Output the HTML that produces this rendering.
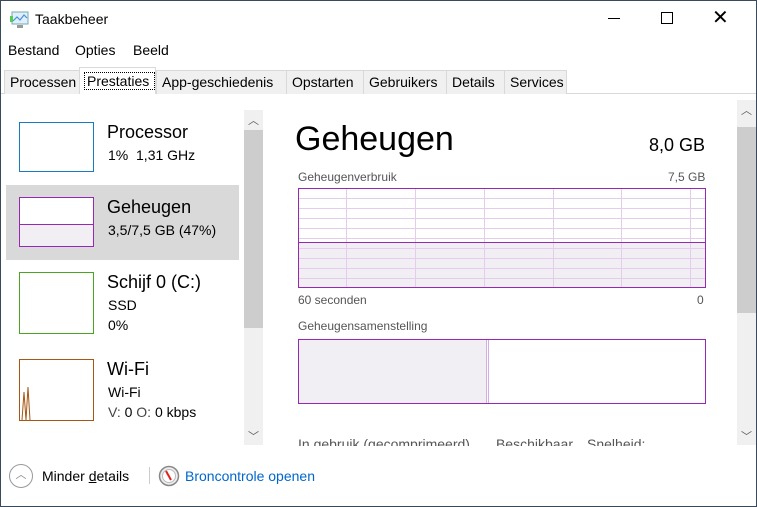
<!DOCTYPE html>
<html><head><style>
*{margin:0;padding:0;box-sizing:border-box}
body{width:757px;height:507px;background:#fff;font-family:"Liberation Sans",sans-serif;color:#000;position:relative;overflow:hidden}
.a{position:absolute;white-space:nowrap}
.tab{position:absolute;top:70px;height:24px;background:#f0f0f0;border:1px solid #d9d9d9;border-bottom:none;font-size:14px;padding:3px 0 0 5px}
.side{font-size:18px}
.sub{font-size:14px}
.g{color:#444}
</style></head><body>
<div class="a" style="left:0;top:0;width:757px;height:507px;border:1px solid #3b4a5a;z-index:9;pointer-events:none"></div>
<svg class="a" style="left:10px;top:11px" width="20" height="18"><rect x="2" y="1" width="16" height="12" fill="#dfefff" stroke="#7aa" /><polyline points="3,10 7,6 10,9 14,4 17,7" fill="none" stroke="#4a8fd6" stroke-width="1.2"/><rect x="0" y="5" width="3" height="6" fill="#5c5"/><rect x="7" y="14" width="6" height="3" fill="#999"/></svg>
<div class="a" style="left:35px;top:11px;font-size:14px">Taakbeheer</div>
<div class="a" style="left:608px;top:18px;width:12px;height:1px;background:#000"></div>
<div class="a" style="left:661px;top:12px;width:12px;height:12px;border:1px solid #000"></div>
<div class="a" style="left:712px;top:5px;font-size:20px;font-weight:300">✕</div>
<div class="a" style="left:8px;top:42px;font-size:14px">Bestand</div>
<div class="a" style="left:75px;top:42px;font-size:14px">Opties</div>
<div class="a" style="left:133px;top:42px;font-size:14px">Beeld</div>
<div class="a" style="left:0;top:93px;width:757px;height:1px;background:#d9d9d9"></div>
<div class="tab" style="left:4px;width:76px">Processen</div>
<div class="tab" style="left:79px;width:77px;top:67px;height:27px;background:#fff;z-index:2;padding-left:4px"><div style="border:1px dotted #000;padding:0 2px;margin-top:1px">Prestaties</div></div>
<div class="tab" style="left:156px;width:131px">App-geschiedenis</div>
<div class="tab" style="left:286px;width:78px">Opstarten</div>
<div class="tab" style="left:363px;width:84px">Gebruikers</div>
<div class="tab" style="left:446px;width:59px">Details</div>
<div class="tab" style="left:504px;width:63px">Services</div>

<div class="a" style="left:19px;top:122px;width:75px;height:50px;border:1px solid #1a7ac0"></div>
<div class="a side" style="left:107px;top:122px">Processor</div>
<div class="a sub" style="left:108px;top:147px">1%&nbsp; 1,31 GHz</div>
<div class="a" style="left:6px;top:185px;width:233px;height:75px;background:#d9d9d9"></div>
<div class="a" style="left:19px;top:197px;width:75px;height:50px;border:1px solid #9528b4;background:linear-gradient(#fff 0 26px,#9528b4 26px 27px,#f2eff4 27px)"></div>
<div class="a side" style="left:107px;top:197px">Geheugen</div>
<div class="a sub" style="left:108px;top:222px">3,5/7,5 GB (47%)</div>
<div class="a" style="left:19px;top:272px;width:75px;height:62px;border:1px solid #4aa520"></div>
<div class="a side" style="left:107px;top:272px">Schijf 0 (C:)</div>
<div class="a sub" style="left:108px;top:297px">SSD</div>
<div class="a sub" style="left:108px;top:317px">0%</div>
<div class="a" style="left:19px;top:359px;width:75px;height:62px;border:1px solid #a75614"></div>
<svg class="a" style="left:20px;top:380px" width="12" height="40"><polyline points="2,40 4,12 6,40 8,7 10,40" fill="none" stroke="#a75614"/></svg>
<div class="a side" style="left:107px;top:359px">Wi-Fi</div>
<div class="a sub" style="left:108px;top:384px">Wi-Fi</div>
<div class="a sub" style="left:108px;top:404px"><span class="g">V:</span> 0 <span class="g">O:</span> 0 kbps</div>
<div class="a" style="left:244px;top:110px;width:19px;height:335px;background:#f0f0f0"></div>
<div class="a" style="left:244px;top:130px;width:19px;height:198px;background:#cdcdcd"></div>
<div class="a" style="left:248px;top:112px;font-size:11px;color:#606060">︿</div>
<div class="a" style="left:248px;top:428px;font-size:11px;color:#606060">﹀</div>

<div class="a" style="left:295px;top:120px;font-size:34px">Geheugen</div>
<div class="a" style="left:649px;top:135px;font-size:18px">8,0 GB</div>
<div class="a" style="left:298px;top:170px;font-size:12px;color:#555">Geheugenverbruik</div>
<div class="a" style="left:668px;top:170px;font-size:12px;color:#555">7,5 GB</div>
<div class="a" style="left:298px;top:188px;width:408px;height:100px;border:1px solid #9528b4;background:
linear-gradient(#9528b4,#9528b4) 0 53px/100% 1px no-repeat,
repeating-linear-gradient(90deg,transparent 0 47px,#e4cdea 47px 48px,transparent 48px 116px,#e4cdea 116px 117px,transparent 117px 185px,#e4cdea 185px 186px,transparent 186px 254px,#e4cdea 254px 255px,transparent 255px 322px,#e4cdea 322px 323px,transparent 323px 391px,#e4cdea 391px 392px,transparent 392px),
repeating-linear-gradient(transparent 0 9px,#e4cdea 9px 10px),
linear-gradient(#fff 0 53px,#f2eff4 53px)"></div>
<div class="a" style="left:298px;top:293px;font-size:12px;color:#555">60 seconden</div>
<div class="a" style="left:697px;top:293px;font-size:12px;color:#555">0</div>
<div class="a" style="left:298px;top:319px;font-size:12px;color:#555">Geheugensamenstelling</div>
<div class="a" style="left:298px;top:339px;width:408px;height:65px;border:1px solid #9528b4;background:linear-gradient(90deg,#f2eff4 0 187px,#d4aee0 187px 188px,#fff 188px 189px,#d4aee0 189px 190px,#fff 190px)"></div>
<div class="a" style="left:298px;top:436px;font-size:14px;color:#555">In gebruik (gecomprimeerd)<span style="display:inline-block;width:26px"></span>Beschikbaar<span style="display:inline-block;width:14px"></span>Snelheid:</div>
<div class="a" style="left:0;top:446px;width:757px;height:61px;background:#fff"></div>
<div class="a" style="left:737px;top:100px;width:19px;height:345px;background:#f0f0f0"></div>
<div class="a" style="left:737px;top:127px;width:19px;height:186px;background:#cdcdcd"></div>
<div class="a" style="left:741px;top:102px;font-size:11px;color:#606060">︿</div>
<div class="a" style="left:741px;top:428px;font-size:11px;color:#606060">﹀</div>

<div class="a" style="left:9px;top:464px;width:24px;height:24px;border:1px solid #999;border-radius:50%;font-size:11px;color:#888;text-align:center;line-height:20px">︿</div>
<div class="a" style="left:42px;top:468px;font-size:14px">Minder <u>d</u>etails</div>
<div class="a" style="left:149px;top:467px;width:1px;height:17px;background:#ccc"></div>
<svg class="a" style="left:158px;top:465px" width="22" height="22"><circle cx="11" cy="11" r="9.5" fill="#eee" stroke="#888" stroke-width="1.5"/><circle cx="11" cy="11" r="6.5" fill="#fff" stroke="#bbb"/><line x1="8" y1="6" x2="13" y2="15" stroke="#d22" stroke-width="2"/></svg>
<div class="a" style="left:185px;top:468px;font-size:14px;color:#0066cc">Broncontrole openen</div>
</body></html>
